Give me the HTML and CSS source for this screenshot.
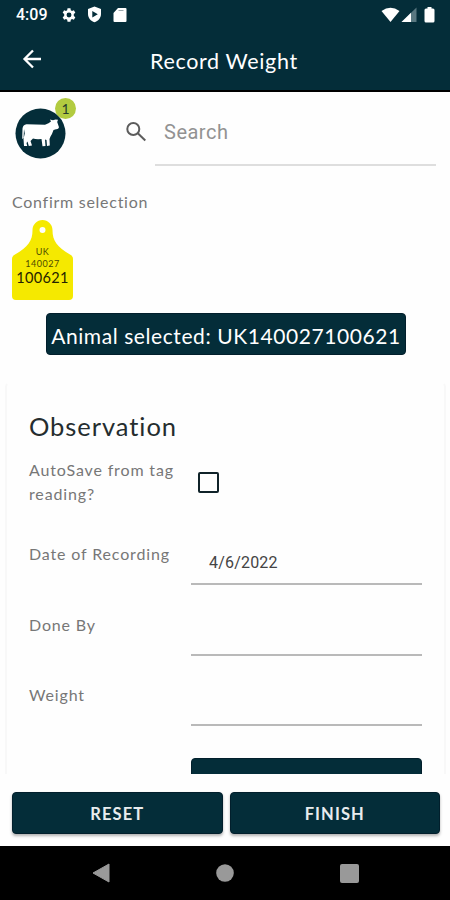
FILE: index.html
```html
<!DOCTYPE html>
<html lang="en">
<head>
  <meta charset="UTF-8">
  <meta name="viewport" content="width=device-width, initial-scale=1.0">
  <title>Record Weight</title>
  <link rel="stylesheet" href="styles.css">
</head>
<body>

  <header class="top">
    <div class="status">
      <span class="time">4:09</span>
      <svg class="gear" width="16" height="16" viewBox="0 0 24 24"><path fill="#fff" fill-rule="evenodd" d="M9.800 2h4.400l.5 2.900 1.800 1 2.800-1 2.200 3.800-2.300 1.900v2.800l2.300 1.900-2.200 3.800-2.800-1-1.800 1-.5 2.900H9.800l-.5-2.900-1.800-1-2.800 1-2.200-3.800 2.300-1.900v-2.800L2.500 8.700l2.200-3.800 2.800 1 1.800-1zM12 8.300a3.700 3.700 0 1 0 0 7.400 3.700 3.700 0 0 0 0-7.400z"/></svg>
      <svg class="shield" width="15" height="17" viewBox="0 0 15 17"><path fill="#fff" fill-rule="evenodd" d="M7.500.5L14 3v5c0 4-2.800 7-6.500 8.300C3.800 15 1 12 1 8V3zM5.300 5v6.600L10.800 8.300z"/></svg>
      <svg class="card-icon" width="14" height="16" viewBox="0 0 14 16"><path fill="#fff" d="M5 1h7.500q1 0 1 1v12q0 1-1 1h-11q-1 0-1-1V6z"/><path stroke="#9aa7ac" d="M5.500 3.500h5"/></svg>
      <span class="space"></span>
      <svg width="19" height="16" viewBox="0 0 19 16"><path fill="#fff" d="M9.500 15L.5 4Q9.500-2.500 18.500 4z"/></svg>
      <svg class="signal" width="16" height="16" viewBox="0 0 16 16"><path fill="#597780" d="M15.500.5V15H.5z"/><path fill="#fff" d="M10 5.800V15H.5z"/></svg>
      <svg class="battery" width="11" height="16" viewBox="0 0 11 16"><path fill="#fff" d="M3.500 0h4v1.500H9q1.500 0 1.500 1.500v11q0 1.500-1.500 1.500H2Q.5 15.500.5 14V3Q.5 1.500 2 1.500h1.500z"/></svg>
    </div>
    <div class="toolbar">
      <svg width="20" height="20" viewBox="0 0 20 20"><path fill="none" stroke="#fff" stroke-width="2.300" d="M19 10H2.500M11 1.500L2.500 10l8.500 8.500"/></svg>
      <h1>Record Weight</h1>
    </div>
  </header>

  <main>
    <div class="search-row">
      <div class="animal">
        <svg width="51" height="51" viewBox="0 0 51 51"><circle cx="25.500" cy="25.500" r="25" fill="#042d39"/><path fill="#fff" d="M7.500 20.500Q8 16.500 11.500 16.200L30 16.800Q34 15.500 36 13.500L35 11.500 38 12.200 40.500 11.600 43 11.800 42.200 14 44 19.300Q43.500 21.500 41 21.300L38.500 22Q37 26.500 35.500 28.500L34.500 31 34.800 37.500 32 38 31.500 32 30 31.500 30.500 38 27.500 38.200 26.500 31Q21 31.500 18 30.500L15.500 33 17 37.500 13.800 38 12.500 33.500 11.500 35 12.200 38 9 38 8.500 31 9.800 25.500 9 21 8.600 30 7.200 31z"/></svg>
        <span class="badge">1</span>
      </div>
      <svg class="search-icon" width="22" height="22" viewBox="0 0 22 22"><g fill="none" stroke="#5c5c5c" stroke-width="2"><circle cx="8.300" cy="8" r="6"/><path d="M12.800 12.300l7.500 7.200"/></g></svg>
      <div class="search-input">Search</div>
    </div>

    <p class="confirm">Confirm selection</p>
    <div class="tag">
      <svg class="tag-shape" width="61" height="80" viewBox="0 0 61 80"><path fill="#f5e900" fill-rule="evenodd" d="M30.500 0C36 0 40.500 4.500 40.500 10C40.500 21 45 27 58 34.500Q61 36 61 39V76Q61 80 57 80H4Q0 80 0 76V39Q0 36 3 34.500C16 27 20.500 21 20.500 10C20.500 4.500 25 0 30.500 0zM30.500 7a3 3 0 1 0 0 6 3 3 0 0 0 0-6z"/></svg>
      <div class="tag-text">
        <span class="country">UK</span>
        <span class="herd">140027</span>
        <span class="number">100621</span>
      </div>
    </div>

    <div class="selected">Animal selected: UK140027100621</div>

    <section class="observation">
      <h2>Observation</h2>
      <div class="field autosave">
        <label>AutoSave from tag reading?</label>
        <span class="checkbox"></span>
      </div>
      <div class="field">
        <label>Date of Recording</label>
        <div class="input">4/6/2022</div>
      </div>
      <div class="field">
        <label>Done By</label>
        <div class="input"></div>
      </div>
      <div class="field">
        <label>Weight</label>
        <div class="input"></div>
      </div>
      <div class="more"></div>
    </section>
  </main>

  <footer class="actions">
    <button>RESET</button>
    <button>FINISH</button>
  </footer>

  <nav class="android">
    <svg width="18" height="20" viewBox="0 0 18 20"><path fill="#999" d="M17 1v18L1 10z" stroke="#999" stroke-linejoin="round"/></svg>
    <svg width="18" height="18" viewBox="0 0 18 18"><circle cx="9" cy="9" r="8.800" fill="#999"/></svg>
    <svg width="19" height="19" viewBox="0 0 19 19"><rect width="19" height="19" rx="2" fill="#999"/></svg>
  </nav>

</body>
</html>
```
FILE: styles.css
```css
* {
  box-sizing: border-box;
}
body {
  margin: 0;
  width: 450px;
  height: 900px;
  display: flex;
  flex-direction: column;
  overflow: hidden;
  background: #fefefe;
  font-family: Lato, "Noto Sans", sans-serif;
}
svg {
  display: block;
  flex: none;
}
.top {
  flex: none;
  height: 92px;
  background: #042d39;
  border-bottom: 2px solid #000;
  color: #fff;
}
.status {
  display: flex;
  align-items: center;
  height: 29px;
  padding: 0 15px 0 16px;
}
.time {
  width: 45px;
  font: 500 16px Roboto, sans-serif;
}
.shield {
  margin-left: 10px;
}
.card-icon {
  margin-left: 11px;
}
.space {
  flex: 1;
}
.signal {
  margin-left: 1px;
}
.battery {
  margin-left: 7px;
}
.toolbar {
  display: flex;
  align-items: center;
  height: 60px;
  padding-left: 22px;
}
.toolbar h1 {
  margin: 3px 0 0 108px;
  font-size: 21.5px;
  font-weight: 400;
  letter-spacing: 0.65px;
}
main {
  flex: none;
  height: 682px;
  overflow: hidden;
}
.search-row {
  display: flex;
  height: 74px;
  padding: 0 14px 0 15px;
}
.animal {
  position: relative;
  width: 51px;
  margin-top: 16px;
}
.badge {
  position: absolute;
  left: 40px;
  top: -10px;
  width: 21px;
  height: 21px;
  border-radius: 50%;
  background: #b2cb40;
  color: #273b2d;
  font-size: 14px;
  line-height: 22px;
  text-align: center;
}
.search-icon {
  margin: 29px 0 0 59px;
}
.search-input {
  flex: 1;
  margin-left: 8px;
  padding: 27px 9px 0;
  border-bottom: 2px solid #dedede;
  color: #929292;
  font: 20px/26px Roboto, sans-serif;
  letter-spacing: 0.5px;
}
.confirm {
  margin: 26px 0 8px 12px;
  color: #777;
  font-size: 16px;
  line-height: 20px;
  letter-spacing: 0.73px;
}
.tag {
  display: grid;
  width: 61px;
  margin-left: 12px;
}
.tag-shape,
.tag-text {
  grid-area: 1 / 1;
}
.tag-text {
  display: flex;
  flex-direction: column;
  align-items: center;
  padding-top: 26px;
  color: #4d4900;
}
.country,
.herd {
  font-size: 9px;
  line-height: 12px;
  letter-spacing: 0.5px;
}
.number {
  color: #252300;
  font-size: 14.5px;
  line-height: 16px;
  letter-spacing: 0.3px;
}
.selected {
  width: 360px;
  height: 42px;
  margin: 13px 0 0 46px;
  border: 1px solid #021f2c;
  border-radius: 4px;
  background: #042d39;
  color: #fff;
  font-size: 21px;
  line-height: 43px;
  letter-spacing: 0.58px;
  text-align: center;
  white-space: nowrap;
}
.observation {
  height: 400px;
  margin: 27px 4px 0 5px;
  padding: 25px 22px 0 23px;
  border: 2px solid #f8f8f8;
  border-top-color: transparent;
  border-radius: 5px;
  color: #777;
}
.observation h2 {
  margin: 0 0 0 -1px;
  color: #252d2f;
  font-size: 25.5px;
  font-weight: 400;
  line-height: 34px;
  letter-spacing: 0.95px;
}
.field {
  display: flex;
  height: 70.5px;
}
.field label {
  width: 161px;
  margin-left: -1px;
  padding-top: 15px;
  font-size: 16px;
  line-height: 24px;
  letter-spacing: 0.85px;
}
.autosave {
  height: 84px;
}
.checkbox {
  width: 21px;
  height: 21px;
  margin: 29px 0 0 8px;
  border: 2px solid #102329;
  border-radius: 2px;
}
.input {
  flex: 1;
  height: 58px;
  margin-left: 1px;
  padding: 24px 18px 0;
  border-bottom: 2px solid #b9b9b9;
  color: #444;
  font: 16px/24px Roboto, sans-serif;
  letter-spacing: 0.2px;
}
.more {
  height: 42px;
  margin: 19px 0 0 161px;
  border: 1px solid #021f2c;
  border-radius: 4px;
  background: #042d39;
}
.actions {
  flex: none;
  display: flex;
  gap: 7px;
  height: 72px;
  padding: 18px 10px 0 12px;
}
.actions button {
  flex: 1;
  height: 42px;
  padding: 1px 0 0;
  border: 1px solid #021f2c;
  border-radius: 4px;
  background: #042d39;
  box-shadow: 0 2px 3px rgba(0, 0, 0, 0.3);
  color: #e8ecee;
  font: 700 16.5px Lato, sans-serif;
  letter-spacing: 1.1px;
}
.android {
  flex: none;
  display: flex;
  align-items: center;
  justify-content: space-between;
  height: 54px;
  padding: 0 91px 0 92px;
  background: #000;
}
```
